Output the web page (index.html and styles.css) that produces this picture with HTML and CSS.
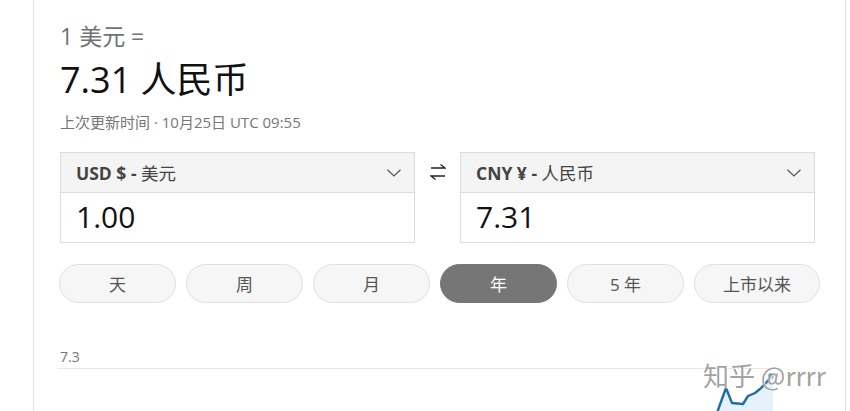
FILE: index.html
```html
<!DOCTYPE html>
<html lang="zh-CN">
<head>
<meta charset="utf-8">
<title>汇率</title>
<link rel="stylesheet" href="styles.css">
</head>
<body>
<div class="card">
  <div class="title">1 美元 =</div>
  <div class="rate">7.31 人民币</div>
  <div class="updated">上次更新时间 · 10月25日 UTC 09:55</div>

  <div class="converter">
    <div class="box">
      <div class="box-head">
        <span class="cur"><b>USD $ -</b> 美元</span>
        <svg class="chev" width="14" height="8" viewBox="0 0 14 8"><path d="M0.5 0.8 L7 7 L13.5 0.8" fill="none" stroke="#555" stroke-width="1.2"/></svg>
      </div>
      <div class="box-val">1.00</div>
    </div>
    <div class="swap">
      <svg width="16" height="18" viewBox="0 0 16 18"><path d="M1 5 H15 L10.5 1.5 M15 13 H1 L5.5 16.5" fill="none" stroke="#222" stroke-width="1.4"/></svg>
    </div>
    <div class="box">
      <div class="box-head">
        <span class="cur"><b>CNY ¥ -</b> 人民币</span>
        <svg class="chev" width="14" height="8" viewBox="0 0 14 8"><path d="M0.5 0.8 L7 7 L13.5 0.8" fill="none" stroke="#555" stroke-width="1.2"/></svg>
      </div>
      <div class="box-val">7.31</div>
    </div>
  </div>

  <div class="ranges">
    <div class="range">天</div>
    <div class="range">周</div>
    <div class="range">月</div>
    <div class="range active">年</div>
    <div class="range">5 年</div>
    <div class="range wide">上市以来</div>
  </div>

  <div class="chart">
    <div class="axis-label">7.3</div>
    <svg class="plot" width="788" height="50" viewBox="0 0 788 50">
      <line x1="0" y1="3.5" x2="718" y2="3.5" stroke="#e8e8e8" stroke-width="1"/>
      <path d="M659 54 L661 45 L669 23 L675 38 L686 39 L691 31 L698 28 L703 24 L708 19 L714 12 L716 12 L716 54 Z" fill="#e5f1fb"/>
      <path d="M659 54 L661 45 L669 23 L675 38 L686 39 L691 31 L698 28 L703 24 L708 19 L714 12" fill="none" stroke="#1c6ea4" stroke-width="2.4" stroke-linejoin="round"/>
      <circle cx="714" cy="11" r="3.2" fill="#1c6ea4" stroke="#fff" stroke-width="1"/>
    </svg>
    <div class="watermark">知乎 @rrrr</div>
  </div>
</div>
</body>
</html>
```

FILE: styles.css
```css
html, body {
  margin: 0;
  padding: 0;
  background: #fff;
  overflow: hidden;
}
body {
  width: 850px;
  height: 411px;
  font-family: "Open Sans", "Noto Sans CJK SC", sans-serif;
  color: #111;
}
.card {
  margin-left: 33px;
  width: 785px;
  height: 411px;
  padding-left: 26px;
  border-left: 1px solid #e6e6e6;
  border-right: 1px solid #e0e0e0;
  box-sizing: content-box;
}
.title {
  padding-top: 23px;
  font-size: 23px;
  line-height: 26px;
  color: #717171;
}
.rate {
  margin-top: 9px;
  font-size: 36px;
  line-height: 44px;
  color: #111;
}
.updated {
  margin-top: 10px;
  font-size: 15px;
  line-height: 20px;
  color: #767676;
}
.converter {
  margin-top: 20px;
  display: flex;
  width: 755px;
}
.box {
  width: 355px;
  box-sizing: border-box;
  border: 1px solid #dcdcdc;
}
.box-head {
  height: 40px;
  box-sizing: border-box;
  background: #f4f4f4;
  border-bottom: 1px solid #dcdcdc;
  display: flex;
  align-items: center;
  justify-content: space-between;
  padding: 0 13px 0 15px;
}
.cur {
  font-size: 17.5px;
  line-height: 20px;
  color: #444;
}
.cur b {
  font-weight: 700;
  color: #444;
}
.chev {
  display: block;
}
.box-val {
  height: 49px;
  padding-left: 15px;
  font-size: 30px;
  line-height: 48px;
  color: #111;
}
.swap {
  width: 45px;
  height: 40px;
  display: flex;
  align-items: center;
  justify-content: center;
}
.swap svg {
  display: block;
}
.ranges {
  margin-top: 21px;
  margin-left: -1px;
  display: flex;
  gap: 10px;
}
.range {
  width: 117px;
  height: 39px;
  box-sizing: border-box;
  border: 1px solid #e0e0e0;
  border-radius: 20px;
  background: #f6f6f6;
  display: flex;
  align-items: center;
  justify-content: center;
  font-size: 17px;
  color: #555;
}
.range.wide {
  width: 126px;
}
.range.active {
  background: #767676;
  border-color: #767676;
  color: #fff;
}
.chart {
  position: relative;
  margin-top: 46px;
}
.axis-label {
  font-size: 14px;
  line-height: 16px;
  color: #767676;
}
.plot {
  display: block;
  margin-left: -3px;
}
.watermark {
  position: absolute;
  left: 643px;
  top: 12px;
  font-family: "Noto Sans CJK SC", sans-serif;
  font-size: 26px;
  line-height: 28px;
  color: rgba(120, 120, 120, 0.7);
  text-shadow: 0 0 1px #fff, 1px 1px 0 rgba(255,255,255,0.8);
  white-space: nowrap;
}
```
